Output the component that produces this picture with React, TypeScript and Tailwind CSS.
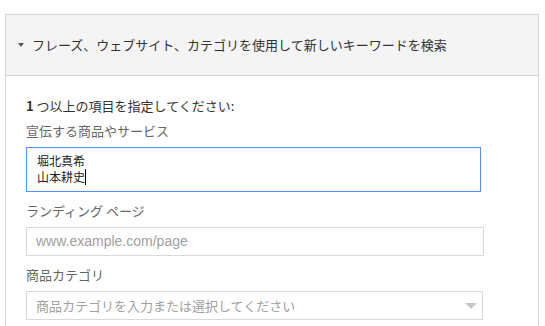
export default function App() {
  return (
    <div
      className="w-[545px] h-[326px] overflow-hidden bg-white pt-[14px] pl-[5px]"
      style={{ fontFamily: '"Noto Sans CJK JP", "Liberation Sans", sans-serif' }}
    >
      <div className="w-[534px] h-[400px] border border-[#d4d4d4]">
        {/* collapsible header */}
        <div className="h-[61px] bg-[#f4f4f4] border-b border-[#d4d4d4] flex items-center pl-[12px]">
          <span className="w-0 h-0 border-l-[3.5px] border-r-[3.5px] border-t-[4px] border-l-transparent border-r-transparent border-t-[#555]" />
          <span className="ml-[8px] text-[13px] leading-[18px] text-[#333]">
            フレーズ、ウェブサイト、カテゴリを使用して新しいキーワードを検索
          </span>
        </div>

        <div className="pl-[20px] pt-[21px] flex flex-col">
          <div className="text-[13px] leading-[18px] text-[#333]">
            <span className="font-bold">1</span> つ以上の項目を指定してください:
          </div>

          <div className="mt-[7px] text-[13px] leading-[18px] text-[#666]">
            宣伝する商品やサービス
          </div>
          <div className="mt-[7px] w-[455px] h-[45px] border border-[#4d90fe] pl-[10px] pt-[5px] text-[12px] leading-[16px] text-[#222]">
            <div>堀北真希</div>
            <div className="flex items-center">
              山本耕史
              <span className="inline-block w-px h-[16px] bg-black" />
            </div>
          </div>

          <div className="mt-[10px] text-[13px] leading-[18px] text-[#666]">
            ランディング ページ
          </div>
          <div
            className="mt-[7px] w-[458px] h-[29px] border border-[#d9d9d9] pl-[9px] flex items-center text-[14px] text-[#a0a0a0]"
            style={{ fontFamily: '"Liberation Sans", sans-serif' }}
          >
            www.example.com/page
          </div>

          <div className="mt-[10px] text-[13px] leading-[18px] text-[#666]">
            商品カテゴリ
          </div>
          <div className="mt-[7px] w-[457px] h-[29px] border border-[#d9d9d9] pl-[9px] pr-[5px] flex items-center justify-between">
            <span className="text-[13px] text-[#a0a0a0]">
              商品カテゴリを入力または選択してください
            </span>
            <span className="w-0 h-0 border-l-[6px] border-r-[6px] border-t-[6px] border-l-transparent border-r-transparent border-t-[#c8c8c8]" />
          </div>
        </div>
      </div>
    </div>
  );
}
